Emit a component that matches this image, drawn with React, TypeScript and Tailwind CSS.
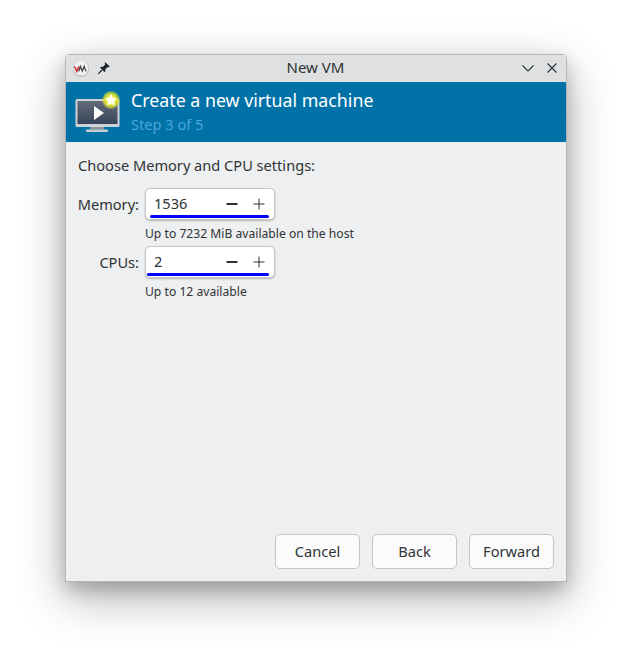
const font = { fontFamily: '"Noto Sans", sans-serif' };

function Logo() {
  return (
    <svg width="16" height="16" viewBox="0 0 16 16" className="shrink-0">
      <circle cx="8" cy="8" r="8" fill="#bdbdc0" />
      <circle cx="8" cy="7.2" r="7.4" fill="#f1f1f2" />
      <path d="M1.6 5.4 L3.8 10.4 L6 5.4" fill="none" stroke="#d22f3a" strokeWidth="1.5" />
      <path d="M5.8 10.4 L7.4 5.4 L9.3 10 L11.2 5.4 L13 10.4" fill="none" stroke="#48484c" strokeWidth="1.3" />
    </svg>
  );
}

function Pin() {
  return (
    <svg width="14" height="14" viewBox="0 0 14 14" className="shrink-0">
      <path d="M8.2 1.2 L12.8 5.6 L11.8 6.3 L10.6 5.9 L8.4 8.2 L8.4 10.3 L7.4 11 L3.2 6.7 L4 5.8 L6 5.7 L8.2 3.4 L7.6 2.1 Z" fill="#20242b" />
      <path d="M5 9 L1.2 12.8" stroke="#20242b" strokeWidth="1.2" />
    </svg>
  );
}

function Monitor() {
  return (
    <svg width="48" height="42" viewBox="0 0 48 42" className="shrink-0">
      <defs>
        <linearGradient id="scr" x1="0" y1="0" x2="0" y2="1">
          <stop offset="0" stopColor="#636b78" />
          <stop offset="1" stopColor="#37435a" />
        </linearGradient>
        <radialGradient id="glow">
          <stop offset="0.4" stopColor="#f6f640" />
          <stop offset="0.75" stopColor="#d8e030" stopOpacity="0.8" />
          <stop offset="1" stopColor="#d8e030" stopOpacity="0" />
        </radialGradient>
      </defs>
      <rect x="0.5" y="8" width="44" height="28" rx="1.5" fill="#cfd2d6" />
      <rect x="2.5" y="10" width="40" height="23" fill="url(#scr)" />
      <rect x="15" y="36" width="14" height="2.5" fill="#8f949a" />
      <rect x="11" y="38.5" width="22" height="2.5" rx="1" fill="#c9cccf" />
      <path d="M19 15 L29 22 L19 29 Z" fill="#fff" />
      <circle cx="36" cy="9" r="9.5" fill="url(#glow)" />
      <path d="M36 3 L37.9 6.8 L42 7.3 L39 10.2 L39.8 14.4 L36 12.4 L32.2 14.4 L33 10.2 L30 7.3 L34.1 6.8 Z" fill="#fffff0" />
    </svg>
  );
}

function SpinBox({ value, underlineStart }: { value: string; underlineStart: string }) {
  return (
    <div className="relative flex h-[32px] w-[130px] items-center rounded-[5px] border border-[#c6c7c9] bg-white pl-[8px] text-[14.6px] leading-[28px] text-[#2e3436] shadow-[0_1px_2px_rgba(0,0,0,0.25)]">
      <span className="mt-[-2px] flex-1">{value}</span>
      <svg width="12" height="12" viewBox="0 0 12 12" className="mr-[15px]">
        <path d="M0.5 6 H11.5" stroke="#2e3436" strokeWidth="2" />
      </svg>
      <svg width="12" height="12" viewBox="0 0 12 12" className="mr-[9px]">
        <path d="M0.5 6 H11.5 M6 0.5 V11.5" stroke="#2e3436" strokeWidth="1" />
      </svg>
      <div className={`absolute bottom-[1px] right-[5px] h-[3px] rounded-full bg-[#0000ff] ${underlineStart}`} />
    </div>
  );
}

function Btn({ label }: { label: string }) {
  return (
    <div className="flex h-[35px] w-[85px] items-center justify-center rounded-[5px] border border-[#c4c5c7] bg-[#fbfbfc] text-[14.6px] text-[#2e3436]">
      {label}
    </div>
  );
}

export default function App() {
  return (
    <div className="h-[659px] w-[632px] overflow-hidden bg-white pl-[65px] pt-[54px]" style={font}>
      <div className="flex h-[528px] w-[502px] flex-col overflow-hidden rounded-t-[5px] border border-t-0 border-[#b4b5b7] bg-[#eeeff1] shadow-[0_16px_48px_rgba(0,0,0,0.3),0_8px_18px_rgba(0,0,0,0.2)]">
        <div className="flex h-[28px] shrink-0 items-center border-t border-[#b4b5b7] bg-[#dee0e2] pl-[7px] pr-[8px]">
          <Logo />
          <div className="ml-[8px] mt-[-2px]"><Pin /></div>
          <div className="mt-[-2px] flex-1 pr-[1px] text-center text-[15px] text-[#2e3436]">New VM</div>
          <svg width="14" height="14" viewBox="0 0 14 14" className="mr-[11px] mt-[-1px]">
            <path d="M1.5 4.5 L7 10 L12.5 4.5" fill="none" stroke="#2e3436" strokeWidth="1.1" />
          </svg>
          <svg width="12" height="12" viewBox="0 0 12 12" className="mt-[-1px]">
            <path d="M1.5 1.5 L10.5 10.5 M10.5 1.5 L1.5 10.5" stroke="#2e3436" strokeWidth="1.1" />
          </svg>
        </div>
        <div className="flex h-[60px] shrink-0 items-center bg-[#0072a8] pl-[9px]">
          <Monitor />
          <div className="ml-[8px] mt-[-2px] flex flex-col">
            <div className="text-[17.8px] leading-[24px] text-white">Create a new virtual machine</div>
            <div className="mt-[2px] text-[14.6px] leading-[20px] text-[#4aa5da]">Step 3 of 5</div>
          </div>
        </div>
        <div className="flex flex-1 flex-col px-[12px] pb-[12px] pt-[14px]">
          <div className="text-[14.6px] leading-[19px] text-[#2e3436]">Choose Memory and CPU settings:</div>
          <div className="mt-[13px] grid grid-cols-[61px_auto] justify-start gap-x-[6px]">
            <div className="flex h-[32px] items-center justify-end whitespace-nowrap pt-[2px] text-[14.6px] text-[#2e3436]">Memory:</div>
            <SpinBox value="1536" underlineStart="left-[4px]" />
            <div />
            <div className="mt-[5px] h-[21px] text-[12.15px] leading-[17px] text-[#2e3436]">Up to 7232 MiB available on the host</div>
            <div className="flex h-[32px] items-center justify-end pt-[2px] text-[14.6px] text-[#2e3436]">CPUs:</div>
            <SpinBox value="2" underlineStart="left-[1px]" />
            <div />
            <div className="mt-[5px] text-[12.15px] leading-[17px] text-[#2e3436]">Up to 12 available</div>
          </div>
          <div className="mt-auto flex justify-end gap-[12px]">
            <Btn label="Cancel" />
            <Btn label="Back" />
            <Btn label="Forward" />
          </div>
        </div>
      </div>
    </div>
  );
}
